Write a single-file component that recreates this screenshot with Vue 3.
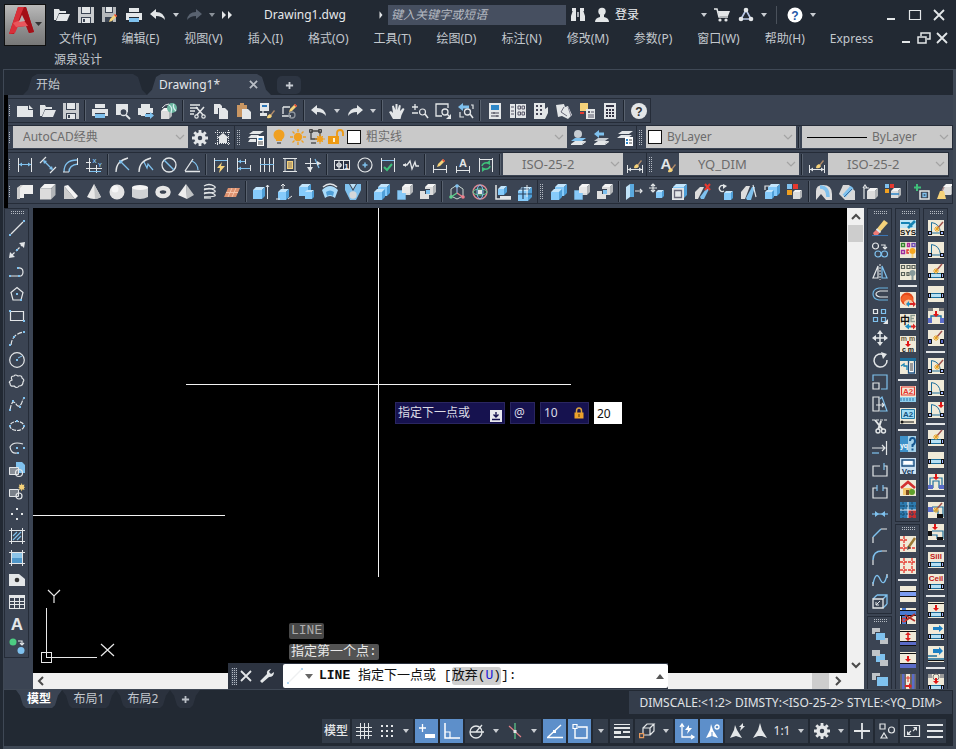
<script setup>
import { h, ref } from 'vue'

const W = '#e3e6e8', B = '#7fc1ee', G = '#8d949c', O = '#f0a020', Y = '#f5d27a', R = '#e5382f', N = '#f0ead8', K = '#111', D = '#3b4453', L = '#5b6cc8', T = '#1d6f9c'

const s = (d, c = W, w = 1.2, x = '') => `<path d="${d}" fill="none" stroke="${c}" stroke-width="${w}" ${x}/>`
const f = (d, c = W) => `<path d="${d}" fill="${c}"/>`
const r = (x, y, w, hh, c = W) => `<rect x="${x}" y="${y}" width="${w}" height="${hh}" fill="${c}"/>`
const o = (x, y, q, c = W, k = 'none', w = 1.2) => `<circle cx="${x}" cy="${y}" r="${q}" fill="${c}" stroke="${k}" stroke-width="${w}"/>`
const t = (x, y, z, txt, c = K) => `<text x="${x}" y="${y}" font-size="${z}" font-weight="bold" font-family="Liberation Sans, Noto Sans CJK SC, sans-serif" fill="${c}" text-anchor="middle">${txt}</text>`
const dots = (list, c = B) => list.map(([x, y]) => r(x, y, 2, 2, c)).join('')
// shaded box: front face at x,y with size z and depth d
const box = (x, y, z, d, blue) => {
  const [a, b, e] = blue ? ['#86cbfb', '#c3e5fb', '#4f9fd8'] : ['#dcdcdc', '#f4f4f4', '#b2b5b8']
  return f(`M${x} ${y + d}h${z}v${z}h${-z}z`, a) + f(`M${x} ${y + d}l${d} ${-d}h${z}l${-d} ${d}z`, b) + f(`M${x + z} ${y + d}l${d} ${-d}v${z}l${-d} ${d}z`, e)
}
const layers = (c, y = 0) => f(`M4 ${9 + y}h11l-4 3H0z`, W) + f(`M4 ${6 + y}h11l-4 3H0z`, c) + s(`M0 ${12.5 + y}h11l4-3`, W, 1)
const pencil = (x, y) => f(`M${x} ${y + 7}l1-3 5-5 2 2-5 5z`, Y) + f(`M${x + 5} ${y}l1-1 2 2-1 1z`, R)
const brush = (x, y) => f(`M${x + 3} ${y + 4}l4-5 1 1-4 5z`, '#b28b6a') + f(`M${x} ${y + 7}q0-3 3-4l2 2q-1 3-5 2z`, Y)
const page = (body) => r(0, 0, 16, 16, N) + body
const dn = (x, y) => f(`M${x - 1} ${y}h2v3h2l-3 3-3-3h2z`, '#e01515')
const win = (y) => r(1, y, 14, 5, '#fff') + r(2, y + 1, 12, 3, '#b7e0f2') + s(`M2 ${y + 0.5}h12M2 ${y + 4.5}h12`, T, 1) + r(0, y, 3, 5, K) + r(13, y, 3, 5, K) + r(1, y + 1, 1, 3, '#9fb6ff') + r(14, y + 1, 1, 3, '#9fb6ff')
const door = s('M3.5 13V2.5q8 1 9 10', T, 1) + s('M3 13h10', T, 1) + r(0, 11, 4, 4, K) + r(12, 11, 4, 4, K) + r(1, 12, 2, 2, '#9fb6ff') + r(13, 12, 2, 2, '#9fb6ff')
const wand = (x, y) => s(`M${x} ${y + 7}l6-7`, '#a0524d', 1.5) + s(`M${x - 3} ${y + 7}h6M${x} ${y + 4}v6M${x - 2} ${y + 5}l4 4M${x - 2} ${y + 9}l4-4`, '#e8a21a', 0.9)
const key = (c = W) => s('M1.5 1v14M14.5 1v14', c, 1)
const star = f('M11 0l1 3 3-1-1 3 2 1-2 1 1 3-3-1-1 3-1-3-3 1 1-3-2-1 2-1-1-3 3 1z', Y)

const icons = {
  open: f('M0 2h5l1 2h6v2H5l-3 7H0z') + f('M5 7h11l-3 7H2z'),
  new: f('M0 3h11v4h5v7H0z') + f('M12 2l4 4h-4z'),
  save: f('M0 0h16v16H0z', '#c9cccf') + r(3, 0, 10, 7, D) + r(4, 0, 8, 6) + r(3, 10, 10, 6, D) + r(4, 11, 8, 5) + r(5, 12, 2, 3, D),
  saveas: f('M0 0h14v15H0z', '#b5b8bb') + r(3, 0, 8, 6, D) + r(4, 0, 6, 5) + r(3, 10, 8, 5, D) + pencil(7, 8),
  print: r(3, 1, 10, 4) + f('M0 6h16v7h-3v-3H3v3H0z') + r(3, 11, 10, 4, B),
  undo: f('M0 7l6-5v3q8 0 9 8-3-4-9-4v3z'),
  redo: f('M16 7l-6-5v3q-8 0-9 8 3-4 9-4v3z'),
  redoOff: f('M16 7l-6-5v3q-8 0-9 8 3-4 9-4v3z', '#596270'),
  more: f('M3 4l4 4-4 4zM9 4l4 4-4 4z'),
  right: f('M6 3l4 5-4 5z'),
  binoc: f('M3 3h3v11H1V9zM10 3h3l2 6v5h-5z') + r(7, 5, 2, 5, '#a9adb3') + r(2, 1, 4, 3) + r(10, 1, 4, 3),
  person: o(8, 4.5, 3.7) + f('M1 15q0-4 5-5V8h4v2q5 1 5 5z'),
  cart: s('M0 2h3l2 8h9', W, 1.5) + f('M4 4h12l-2 5H5z') + o(6, 13, 1.6) + o(12, 13, 1.6),
  tri: s('M8 3L3 12h10z', '#b8c6e6', 1.6) + o(8, 3, 2.3) + o(3, 12, 2.3) + o(13, 12, 2.3),
  help: o(8, 8, 7.5, '#fff') + t(8, 12.5, 12, '?', '#2558a8'),
  min: r(4, 11, 8, 2),
  max: s('M2.500 3.500h11v9h-11z', W, 1.2),
  close: s('M3 3l10 10M13 3L3 13', W, 1.8),
  mdi: s('M2 7h8v6H2z', W, 1.5) + s('M5 6V3h9v6h-3', W, 1.5),
  wrench: f('M1 13l7-7q-1-4 4-5l-2 3 2 2 3-2q0 5-5 5l-7 6z'),
  preview: r(1, 1, 12, 8) + f('M1 9h6l-2 3H1z') + o(8.5, 9, 3.5, D, W, 1.3) + s('M11 12l4 4', W, 1.8),
  publish: r(3, 1, 9, 4) + f('M0 5h15v5H8v2H0z') + r(3, 9, 5, 4) + f('M7 11h5V9l4 3.5-4 3.5v-2H7z', B),
  globe3d: box(0, 5, 8, 3) + o(11, 5, 5, '#6bb6a0') + s('M8 2q4 2 2 8M13 1q-2 3 2 7', '#d8eef0', 1.2) + s('M1 5q3-4 7-4', W, 1),
  cut: s('M0 2h10M0 5h8M0 8h5M0 11h4', W, 1.6) + s('M6 4l8 9M14 4l-8 9', W, 1.6) + o(6.5, 13.5, 1.7, D, W) + o(13.5, 13.5, 1.7, D, W),
  copy: f('M1 1h6l2 2v2H5v6H1z') + f('M6 5h6l3 3v8H6z'),
  paste: f('M1 2h3V0h4v2h3v12H1z', '#c99662') + f('M6 6h6l3 3v7H6z'),
  match: r(1, 0, 9, 8) + r(3, 2, 5, 2, '#2c76b8') + r(1, 10, 7, 3) + brush(8, 8) + s('M4 8v3', W),
  blockedit: s('M1 4h7M1 4v7M0 13h9', W, 1.3) + o(10, 12, 3, 'none', G, 1.3) + pencil(7, 2),
  pan: f('M4 16L0 9l2-1 2 2L3 3l1.700-.5L6.500 7V1h2v6l1.500-5 1.800.5L11 8l3-3 1.500 1-3 6-1 4z'),
  zoompm: s('M0 4h6M3 1v6M0 10h6', W, 1.3) + o(10.5, 9, 3, 'none', W) + s('M13 11l3 4', W, 1.5),
  zoomwin: s('M13 5V1H1v12h6', W, 1.3) + o(10, 9, 3, 'none', W, 1.3) + s('M12 11l2 2', W, 1.5) + f('M16 11v5h-5z'),
  zoomprev: f('M0 4l5-4v2.500h6v3H5V8z', B) + s('M13 2h2v4M2 9v5h4', W) + o(9.5, 9, 3, 'none', W, 1.3) + s('M12 11l3 4', W, 1.5),
  props: r(2, 0, 12, 16) + r(4, 2, 8, 5, '#2c86c8') + s('M4 10h8M4 13h8M7 9v2M10 12v2', '#445', 1),
  design: r(0, 1, 5, 14) + r(6, 1, 10, 14) + s('M1 4h3M1 8h3M1 11h3', '#556', 1) + s('M8 3h2.500v3H8zM12 3h2.500v3H12zM8 9h2.500v3H8zM12 9h2.500v3H12z', '#556', 1),
  palette: f('M1 0h11v6l3-2v6l-3 6H1z') + dots([[3, 2], [7, 2], [3, 6], [7, 6], [3, 10], [7, 10]], '#445'),
  sheet: f('M0 2l8-1 1 3 3-1 4 9-4 4-6-3-4 1z') + s('M8 4l-3 5 6 4', '#667', 1) + s('M12 4l3 9', '#889', 1),
  markup: f('M1 0h8v8H1z', Y) + r(7, 6, 9, 10) + r(9, 8, 2, 2, '#556') + s('M12 9h3M9 12h6M9 14h6', '#556', 1) + s('M1 10h4', R, 2),
  calc: r(2, 0, 12, 16) + r(4, 2, 8, 2, '#334') + dots([[4, 6], [7, 6], [10, 6], [4, 9], [7, 9], [10, 9], [4, 12], [7, 12], [10, 12]], '#334'),
  helpg: o(8, 8, 8) + t(8, 12.5, 12, '?', '#333'),
  gear: o(8, 8, 4, 'none', W, 3.5) + s('M8 0v3M8 13v3M0 8h3M13 8h3M2.300 2.300l2 2M11.700 11.700l2 2M13.700 2.300l-2 2M4.300 11.700l-2 2', W, 2.8),
  wshouse: s('M2.500 0v16M13.500 0v16M0 2.500h16M0 13.500h16', W, 1, 'stroke-dasharray="1 1"') + f('M8 3l6 5h-2v5H4V8H2z'),
  layprop: f('M5 1h11l-4 3H1z') + f('M3 5h8l-2 3H0z') + f('M2 9h6v3H0z') + r(9, 6, 7, 10, '#fff') + r(10.5, 8, 4, 2, '#2c86c8') + s('M10 12h5M10 14h5', '#444', 1),
  bulb: o(8, 6, 5.5, O) + r(5, 10, 6, 2, O) + r(6, 13, 4, 2, '#777'),
  sun: o(8, 8, 4.2, O) + s('M8 0v3M8 13v3M0 8h3M13 8h3M2.500 2.500l2 2M11.500 11.500l2 2M13.500 2.500l-2 2M4.500 11.500l-2 2', O, 1.3),
  freeze: s('M2 2h9v8H2z', '#444', 1.3) + s('M.5.5h3v3h-3zM9.500.5h3v3h-3z', '#444', 1) + o(11, 10, 3, O) + s('M11 5v10M6 10h10M8 7l6 6M14 7l-6 6', O, 1) + s('M2 14h5', '#444', 1.3),
  unlock: r(0, 7, 11, 8, '#ee9a12') + s('M9 7V4q0-3 3-3t3 3v3', '#ee9a12', 1.8) + r(5, 9, 2, 4, '#fff2cc'),
  laycur: layers(B, 2) + o(7, 4, 4, '#c7ccd1'),
  layprev: layers('#c7ccd1', 2) + f('M0 4l5-4v2.500h5v3H5V8z', B),
  laystate: f('M5 1h11l-4 3H1z') + f('M4 5h11l-4 3H0z') + r(8, 7, 8, 9, '#fff') + dots([[9, 9], [9, 12]], '#2c86c8') + s('M12 10h3M12 13h3', '#444', 1),
  dlin: key() + s('M2 7.500h12', B, 1) + f('M2 7.500l3-2v4zM14 7.500l-3-2v4z', B),
  dalign: s('M0 6l6-6M10 16l6-6', W) + s('M4 4l8 8', B) + f('M3 3l4 1-3 3zM13 13l-4-1 3-3z', B),
  darc: s('M1 15Q1 3 14 3M6 15q0-7 9-8', B, 1.3) + s('M0 15h6M14.500 1v7', W, 1),
  dord: s('M3.500 1v14M0 11.500h16', W, 1) + s('M0 5.500h5M10.500 8v8', W, 1) + t(8.5, 5.5, 6, 'X', B) + t(14, 9.5, 6, 'Y', B) + s('M4 14.500h11', B, 1),
  drad: s('M1 15Q1 4 13 1', W, 1.3) + s('M5 4l9 9', B) + f('M4 3l4 1-3 3z', B),
  djog: s('M1 15Q1 4 13 1', W, 1.3) + s('M6 5l3 6 1-4 5 6', B),
  ddia: o(8, 8, 7, 'none', W, 1.3) + s('M3 3l10 10', B, 1.4),
  dang: s('M1 14L9 2M1 14.500h15', W, 1.3) + s('M8 4q6 3 6 9', B),
  dquick: key() + s('M2 3.500h12', B, 1) + f('M9 5l-5 6h3l-1 5 6-7H8z', Y),
  dbase: s('M1.500 1v14M9.500 2v5M14.500 8v6', W, 1) + s('M2 4.500h7M2 11.500h12', B, 1) + f('M2 4.500l3-2v4zM2 11.500l3-2v4z', B),
  dcont: s('M1.500 1v14M5.500 1v14M10.500 1v14M14.500 1v14', W, 1) + s('M1 7.500h14', B, 1),
  dspace: s('M1 1.500h14M1 14.500h14M3 2v12M13 2v12', W, 1) + f('M5 4h6v8H5z', Y) + s('M6 6h4M6 8h4M6 10h4', '#876', 1),
  dbreak: s('M5.500 1v14M0 6.500h16', W, 1) + s('M10 2l4 9', B) + f('M2 10h6l-3 5zM12 4l4 2.500-4 2z', W),
  tol: r(0, 3, 16, 10, W) + r(1, 4, 8, 8, '#2a3040') + r(10, 4, 5, 8, '#2a3040') + s('M5 4v8M2 8h6', W, 1) + o(5, 8, 2, 'none', W) + t(12.5, 11.5, 8, '1', W),
  center: o(8, 8, 7, 'none', W) + s('M8 5.500v5M5.500 8h5', B, 1.5),
  inspect: key() + s('M2 3.500h12', B, 1) + s('M4 10l3 3 5-6', '#3fc07a', 2),
  jogline: s('M0 8h4l3-4 2 8 3-7 1 4h3', W, 1.3) + f('M0 8l3-2v4z'),
  dedit: s('M1.500 8v8M14.500 8v8M1 12.500h14', W, 1) + pencil(5, 3),
  dtedit: s('M1.500 9v7M14.500 9v7M1 13.500h14', W, 1) + t(8, 10, 11, 'A', W),
  dupd: key() + s('M2 2.500h12', W, 1) + s('M4 9q1-4 7-3M12 9q-1 4-7 3', '#3fc07a', 1.6) + f('M12 3v5l-4-2zM4 15v-5l4 2z', '#3fc07a'),
  dstyle: s('M.5 8v8M15.500 8v8M1 12.500h14', W, 1) + f('M1 12.500l3-2v4zM15 12.500l-3-2v4z') + brush(7, 4),
  tstyle: t(6, 12, 15, 'A', W) + brush(8, 8),
  polysolid: f('M0 4l4-3v11l-4 3z', '#b9bcbf') + f('M4 1h12v9H7v4H3V3z', '#eee') + f('M0 4l4-3h2L3 4v11H0z', '#ccc'),
  box: box(0, 0, 11, 4.5),
  wedge: f('M1 2l4-1 10 11-3 3z', '#f4f4f4') + f('M1 2v13h11z', '#ccc'),
  cone: f('M8 0l7 13q-7 4-14 0z', '#e8e8e8') + f('M8 0l7 13q-3 2-6 2z', '#c2c4c6'),
  sphere: o(8, 8, 7.5, '#e4e4e4') + o(6, 5, 3.5, '#f6f6f6'),
  cyl: f('M0 3v10q8 4 16 0V3z', '#d0d2d4') + `<ellipse cx="8" cy="3.500" rx="8" ry="2.600" fill="#f4f4f4"/>`,
  torus: `<ellipse cx="8" cy="8" rx="5.500" ry="4" fill="none" stroke="#e6e6e6" stroke-width="4.500"/>`,
  pyr: f('M8 0l8 11-7 4z', '#bfc2c4') + f('M8 0L0 11l9 4z', '#ededed'),
  helix: [2, 6, 10].map(y => s(`M3 ${y}q5-3 10 0t-10 3`, W, 1.3)).join('') + s('M3 14h7', W),
  planar: f('M4 4h12l-4 9H0z', '#dd9270') + s('M8 4l-4 9M12 4l-4 9M2 8.500h12', '#f4c4aa', 1),
  extrude: box(0, 3, 9, 3, 1) + s('M14.500 1v14M13 3l1.500-2L16 3', W, 1),
  presspull: box(2, 5, 8, 3, 1) + s('M7 6V0M5 2l2-2 2 2M0 15h4M12 15l4-3', W, 1),
  sweep: box(0, 0, 9, 3, 1) + box(6, 6, 7, 2, 1),
  revolve: f('M0 6q8-8 16 0l-3 8q-5-4-10 0z', '#a9dbfa') + s('M1 3q7-6 14 0', W, 1.5) + f('M4 8q4-3 8 0l-1 4q-3-2-6 0z', '#4f9fd8'),
  loft: f('M0 0h4l4 7 4-7h4v6l-5 10H5L0 6z', B) + o(8, 11, 3.7, '#d5d7d8') + f('M5 0h6L8 5z', '#bcdff5'),
  union: box(4, 0, 9, 3, 1) + box(0, 5, 8, 3, 1),
  subtract: box(5, 0, 8, 3) + s('M1 7h7v8H1z', B, 1.5) + f('M1 7h7v8H1z', '#87c9f8') + f('M5 3h8v6H5z', '#e8e8e8'),
  intersect: box(5, 0, 8, 3) + f('M0 7h9v8H0z', '#e0e0e0') + r(5, 5, 5, 5, D) + r(6, 6, 4, 4, B),
  gizmo: s('M8 1L2 5v7l6 3 6-3V5z', '#c9d6d0', 1) + s('M8 1v8', '#9ad', 1.2) + s('M8 9l-6 4', '#5fd08d', 1.3) + s('M8 9l6 4', '#ef7f8c', 1.3) + o(2, 13, 1.8, '#5fd08d') + o(14, 13, 1.8, '#ef7f8c') + o(8, 2, 1.8, B),
  orbit: o(8, 8, 7, 'none', '#e28a94', 1.3) + `<ellipse cx="8" cy="8" rx="7" ry="3" fill="none" stroke="#62cf92"/><ellipse cx="8" cy="8" rx="3" ry="7" fill="none" stroke="#7fc1ee"/>` + r(6, 6, 4, 4),
  ucsface: s('M1 1v14h15', W, 1.5) + box(3, 2, 6, 3, 1) + f('M5 12h11v3H5z'),
  solidedit: box(0, 3, 10, 4, 1) + s('M5 3v12M0 10h14M1 5h10', '#29405c', 1.2) + s('M9 1v12', W, 1),
  exface: f('M0 3l4-3v13l-4 3z', '#bfe2f8') + f('M4 0h4v13H4z', '#5aa9df') + s('M9 7h7M14 5l2 2-2 2', W),
  mvface: s('M0 4h8M4 0v8M2 2l2-2 2 2M2 6l2 2 2-2', W, 1.2) + box(7, 6, 6, 2, 1),
  offface: box(1, 0, 11, 3, 1) + r(0, 4, 12, 12, W) + s('M2.500 6.500h7v7h-7z', '#667', 1.3),
  delface: f('M0 8l5-5h4l-6 12H0z', '#ddd') + f('M5 13l6-8h3l-5 10H6z', B) + s('M10 0l5 6M15 0l-5 6', R, 2),
  rotface: s('M6 2a3 3 0 1 0 0 5', W, 1.3) + f('M5 0l4 2-4 3z') + box(6, 7, 7, 2, 1),
  tapface: f('M0 8l5-6h4L4 15H0z', '#ddd') + f('M5 14l6-11h3l-4 13H6z', B) + s('M12 1l3 12', W),
  cpface: box(4, 0, 9, 3, 1) + box(1, 6, 7, 2, 1) + s('M1 6V2h4', W),
  colface: r(0, 0, 5, 5, B) + r(6, 0, 5, 5, R) + r(0, 6, 5, 5, O) + box(6, 6, 7, 2),
  filletedge: f('M0 7q0-6 7-6 9 0 9 9v6h-6L5 10l-5 6z', '#ddd') + s('M4 3q8 0 8 10', B, 3.5),
  chamedge: f('M4 1h6l6 6v9H6L0 10z', '#d8d8d8') + s('M5 12l8-9', B, 4) + s('M5 13l8-8', '#3b6c98', 1),
  imprint: box(5, 4, 8, 3) + s('M2 15V4h5M1 4l2-3 2 3', W, 1.2),
  coledge: r(0, 0, 4, 4, B) + r(5, 0, 4, 4, R) + r(0, 5, 4, 4, O) + box(6, 4, 7, 3) + s('M6 10h8', '#2c86c8', 1.5),
  clean: s('M3 0v7M0 3.500h7', '#3fc07a', 2) + s('M6 7h9v8H6z', W, 1.5) + s('M9 9.500h3v3H9z', B, 1.3),
  shell: box(6, 0, 8, 3) + f('M3 7h4l2 8H0z', Y) + s('M5 7l2-4', '#a88', 1.5),
  line: s('M2 14L14 2') + dots([[0, 14], [14, 0]]),
  xline: s('M2 14L14 2', W, 1.2, 'stroke-dasharray="5 2"') + f('M16 0l-1 6-5-5zM0 16l1-6 5 5z') + r(7, 7, 2, 2, B),
  pline: s('M1 12h8M8 4q6-1 6 4t-5 4') + dots([[0, 11], [9, 11], [8, 3]]),
  polygon: s('M8 1.500l6 5-2 7.500h-8L2 6.500z') + r(7, 7, 2, 2, B) + r(11, 13, 2, 2, B),
  rect: s('M1.500 3.500h13v9h-13z') + dots([[0, 2], [14, 12]]),
  arc: s('M2 15Q3 4 15 2', W, 1.2, 'stroke-dasharray="5 1.500"') + dots([[0, 14], [4, 6], [14, 1]]),
  circle: o(8, 8, 7.3, 'none', W) + r(7, 7, 2, 2, B) + s('M9 6l4-2', B, 1),
  cloud: s('M3 6q-2-4 2-4 1-2 4 0 4-1 4 2 3 2 1 4 0 4-4 4-2 3-5 0-4 1-4-3-2-1 2-3z'),
  spline: s('M1 14Q3 2 7 8t7-5', W, 1.2, 'stroke-dasharray="5 1"') + dots([[0, 13], [3, 4], [10, 10], [14, 1]]),
  ellipse: `<ellipse cx="8" cy="8" rx="7" ry="4.500" fill="none" stroke="${W}" stroke-width="1.200" stroke-dasharray="4 1"/>` + dots([[7, 2], [0, 7], [14, 7]]),
  earc: s('M14 4Q4 1 1 7q1 7 7 6', W) + dots([[7, 7], [14, 7], [8, 12]]),
  insert: f('M7 0h6l3 3v8H7z', B) + f('M0 5h9v8H0z', '#8a9098') + s('M.5 5.500h9v7h-9z', W, 1) + o(10, 11, 3.5, 'none', W, 1.2),
  mkblock: f('M0 5h9v8H0z', '#7a818a') + s('M.5 5.500h9v7h-9z', W, 1) + o(10, 12, 3, 'none', W) + `<g transform="translate(5 -1) scale(.7)">${star}</g>`,
  point: dots([[7, 2], [2, 7], [12, 7], [7, 12]], W),
  hatch: s('M2.500 0v16M13.500 0v16M0 2.500h16M0 13.500h16', W, 1) + s('M4 8l4-4M4 12l8-8M8 12l4-4', B, 1.2),
  grad: r(3, 3, 10, 10, '#4f97c9') + r(3, 3, 10, 5, '#8cc4e8') + s('M2.500 0v16M13.500 0v16M0 2.500h16M0 13.500h16', W, 1),
  region: f('M0 2h10l6 5v7H0z') + o(8, 8, 2.3, '#333'),
  table: r(0, 1, 16, 14) + r(1, 4, 14, 10, D) + s('M0 7.500h16M0 10.500h16M5.500 4v10M10.500 4v10', W, 1),
  text: t(8, 14, 17, 'A', W),
  addsel: o(4, 4, 3.5, '#4ccc82') + o(12, 12.5, 3.5, B) + s('M9 3h4v4M11 5l2 2 2-2', W),
  erase: s('M0 15.500h16', '#3b76b5', 1) + f('M4 10l8-10 4 3-8 9z', Y) + f('M4 10l-3 3 1 2h4l2-3z', '#ef7b78') + s('M4.500 9l4 3.500', W, 1.8),
  copy2: o(3.5, 4, 3, 'none', W) + o(6, 12, 3, 'none', B) + o(12.5, 12, 3, 'none', B) + s('M9 3h4v4M11 5l2 2 2-2'),
  mirror: s('M6 2v12H1z') + s('M10 2v12h5z', B) + s('M8 0v16', W, 1, 'stroke-dasharray="2 1"'),
  offset: s('M16 2H7Q1 3 1 8t6 6h9', '#69b1e0') + s('M16 5H8Q4 6 4 8t4 3h8'),
  array: s('M1.500 1.500h4v4h-4z') + s('M9.500 1.500h4v4h-4zM1.500 9.500h4v4h-4zM9.500 9.500h4v4h-4z', B) + f('M16 11v5h-5z'),
  move: s('M8 2v12M2 8h12', W, 1.5) + f('M8 0l3 4H5zM8 16l3-4H5zM0 8l4-3v6zM16 8l-4-3v6z'),
  rotate: s('M12 3A6.500 6.500 0 1 0 15 8', W, 1.5) + f('M9 0l6 2-4 5z'),
  scale: s('M1 9h6v6H1z') + s('M1 7V1h14v14H9', B),
  stretch: s('M1 1h6v14H1z') + s('M8 3l2-2 5 14H8', B, 1.2) + s('M4 9h8M10 7l2 2-2 2', W),
  trim: s('M0 2h16', W, 1, 'stroke-dasharray="3 1"') + s('M3 2l8 10M9 3L6 12', W, 2) + o(11.5, 13, 2, D, W, 1.4) + o(6, 13, 2, D, W, 1.4),
  extend: s('M0 8h12M10 5l3 3-3 3') + s('M14.500 1v14') + s('M0 13h7', B),
  brkpt: s('M8 4H1v10h14V4h-3') + s('M12 1v7', B),
  brk: s('M5 4H1v10h14V4h-4') + s('M5 1v6M11 1v6', B),
  join: s('M0 8h16', B) + f('M7 8L3 5v6zM9 8l4-3v6z', B),
  chamfer: s('M1 15V9M9 1h6') + s('M1 9l8-8', B, 1.5),
  fillet: s('M1 15v-5M10 1h5') + s('M1 10Q1 1 10 1', B, 1.5),
  blend: s('M1 14v-4M15 2v4') + s('M1 12Q4 -2 8 7t7-4', B, 1.3),
  explode: s('M5 1h10v9M15 1l-4 4M5 1L1 5M15 10l-4 4', B, 1.3) + s('M1 5h10v9H1z', W, 1.3) + s('M4 11l4-4M4 8v3h3', W, 1),
  order1: r(0, 0, 8, 6, '#bfc3c7') + r(8, 10, 8, 6, '#bfc3c7') + r(3, 4, 10, 8, D) + r(4, 5, 9, 7, B),
  order2: r(4, 4, 9, 8, B) + r(0, 0, 8, 6, '#bfc3c7') + r(8, 10, 8, 6, '#bfc3c7'),
  order3: r(0, 1, 8, 7, '#bfc3c7') + r(4, 4, 12, 10, D) + r(5, 5, 11, 9, B),
  sys: page(r(0, 0, 16, 8, '#bfe6f5') + s('M1 3h8l3 4', '#1684b4', 2) + s('M8 8l7-7', '#1684b4', 2.6) + t(8, 15, 8, 'SYS')),
  set1: page(s('M1.500 1.500h3v3h-3z', '#31842c', 1.4) + s('M7.500 1.500h2v3h-2z', '#b02c96', 1.4) + s('M12 1.500h3v3h-3z', '#6a46b5', 1.4) + s('M1.500 8.500h3v3h-3z', '#9c2d9e', 1.4) + s('M9 8h-2v3h2', R, 1.4) + o(12.5, 9, 3, '#f6a720') + r(11.5, 12, 2, 4, Y)),
  set2: page(s('M1.500 1.500h3v3h-3zM7 1.500h3v3h-3zM12 1.500h3v3h-3zM1.500 8.500h3v3h-3zM7 8.500h2v3h-2z', '#59605a', 1.2) + o(12.5, 9, 3, '#87999a') + r(11.5, 11, 2, 5, '#87999a')),
  head: page(o(7, 7, 6.5, '#e64a1a') + o(8, 10, 4, '#f8c9a5') + f('M1 8q2-8 11-3l2 5q-6-5-10 0z', '#f4642c') + f('M6 12l3-3v2h1v2H9v2z', '#1f8fc4') + f('M10 11h3V9l3 3-3 3v-2h-3z', '#d92323')),
  zhen: page(t(5, 10, 10, '中') + s('M15 1.500h-4v6h4M11 4.500h3', '#8a9a90', 1.3) + f('M5 12.500l4-3v2h2v2H9v2z', '#1f8fc4') + f('M11 11.500h2v-2l3 3-3 3v-2h-2z', '#d92323')),
  mmcm: page(t(8, 5, 7, 'm m', '#6a5a3a') + t(8, 15.5, 7, 'c m') + dn(8, 5)),
  board: page(r(0, 0, 16, 3, T) + r(8, 5, 7, 10, '#fff') + s('M8.500 3v12h6V3', '#1b4f80', 1.3) + s('M10 6h3M10 8h3M10 10h3M10 12h3', '#333', 1) + s('M1 8l3-2v2h3v4', '#1684b4', 1.3)),
  az1: page(s('M1.500 1h13v8h-13z', R, 1.2) + t(8, 8, 8, 'A2', R) + r(0, 11, 16, 5, '#8fd0ee') + s('M1 12v3M4 12v3M7 12v3M10 12v3M13 12v3', '#2c76a8', 1)),
  az2: page(r(1, 1, 14, 10, '#9fdcf5') + s('M1.500 1.500h13v9h-13z', '#267ca8', 1) + t(8, 9, 8, 'A2', '#14527e') + s('M2 14h12', K, 1) + o(2, 14, 1.5, K)),
  yq: r(0, 0, 16, 16, '#3e91c9') + r(8, 0, 8, 16, '#a6d2ea') + t(4, 12, 7, 'yq', '#fff') + s('M10 5q0-3 2.500-3t2.500 3-2.500 4v2', '#15568f', 2) + r(11.5, 12.5, 2, 2, '#15568f'),
  ver: r(0, 0, 16, 16, '#cfe3f2') + s('M2 2h12v6H2z', '#1b4f80', 1.4) + r(4, 3, 8, 3, '#fff') + t(8, 15.5, 8, 'Ver', '#12355c'),
  home: page(s('M1 8l7-6 7 6', '#d23030', 2.6) + r(3, 8, 9, 7, '#f3c66c') + r(6, 10, 3, 5, '#7d4a1e') + o(12, 12, 3, '#5fa02c')),
  blocks: r(0, 0, 16, 16, '#2d7bb0') + r(8, 8, 8, 8, '#c62f2f') + s('M8 0v16M0 8h16', '#eee', 1) + s('M3 0v16M0 4h16M0 12h16M12 0v16', '#1b4766', 1, 'stroke-dasharray="2 1"'),
  axis1: page(s('M4 0v16M0 12h16M0 4h7', R, 1.3, 'stroke-dasharray="3 1"') + s('M8 12l7-10', '#9c7a34', 2.5) + f('M7 14l1-4 3 2z', '#444')),
  axis2: page(s('M4 0v16M12 0v16M0 4h16M0 12h16', R, 1.3, 'stroke-dasharray="3 1"')),
  wall1: page(r(0, 5, 16, 6, '#7b9cf0') + s('M0 5.500h16M0 10.500h16', K, 1.2)),
  wall2: page(s('M0 5h16M4 0v16', '#4a7bd0', 4) + s('M0 2.500h16M0 7.500h16M1.500 8v8M6.500 8v8', K, 1) + s('M5 7l10 6M5 13l10-7', '#b0302a', 1.8) + o(4, 12, 1.8, 'none', R)),
  wall3: page(s('M0 1.500h16M0 11.500h16M0 15.500h16', K, 1) + r(0, 12, 16, 3, L) + s('M8 3v7', R, 1.8) + f('M8 2l3 3H5zM8 11l3-3H5z', '#d22')),
  wall4: page(s('M0 1.500h16M0 11.500h16', K, 1) + r(0, 12, 16, 4, L) + dn(8, 4)),
  wall5: page(s('M1 0v16M5 0v16M11 0v16M15 0v16', K, 1.2) + r(2, 0, 2.5, 16, L) + r(12, 0, 2.5, 16, L) + f('M5 11h4V9l3 3-3 3v-2H5z', '#d22') + s('M8 2v6M6 4h5', R, 1)),
  dr1: page(door + wand(9, 2)),
  dr2: page(door),
  dr3: page(door + dn(13, 0)),
  wn1: page(win(9) + wand(8, 0)),
  wn2: page(win(7)),
  wn3: page(r(0, 0, 5, 3, '#777') + r(11, 0, 5, 3, '#777') + s('M3 14V8h10v6', T, 1.4) + r(0, 10, 4, 5, L) + r(12, 10, 4, 5, L) + dn(8, 3)),
  wn4: page(r(0, 9, 4, 5, L) + r(12, 9, 4, 5, L) + s('M.5 9.500h3v4h-3zM12.500 9.500h3v4h-3z', K, 1) + wand(8, 1)),
  wn5: page(s('M2 14V4h12v10M5 14V7h6v7', T, 1.2) + r(0, 11, 5, 4, L) + r(11, 11, 5, 4, L) + dn(8, 0)),
  cn1: page(s('M4 5h11v10M4 9h6v6', T, 1.2) + r(0, 5, 5, 5, L) + r(9, 12, 6, 4, K) + wand(8, 1)),
  cn2: page(s('M4 7h11v8M4 11h5v4', T, 1.2) + r(0, 7, 4, 5, K) + r(9, 13, 6, 3, K) + dn(7, 0)),
  sill: page(t(8, 7, 8, 'Sill', '#c01818') + win(10)),
  ceil: page(t(8, 7, 8, 'Ceil', '#c01818') + win(10)),
  op1: page(s('M0 1.500h16', K, 1) + win(10) + dn(8, 3)),
  op2: page(win(10) + f('M5 3h6V1l4 3.500L11 8V6H5z', '#1c80c4')),
  op3: page(s('M0 10h9M0 13h16', T, 1.6) + f('M5 3h6V1l4 4-4 4V7H5z', '#1c80c4') + r(0, 14, 16, 1, K)),
  op4: page(o(8, 3, 3, 'none', '#777', 1) + r(0, 0, 4, 4, '#999') + r(12, 0, 4, 4, '#999') + dn(8, 4) + win(11)),
  grid: s('M4.500 0v16M8.500 0v16M12.500 0v16M0 4.500h16M0 8.500h16M0 12.500h16', W, 1),
  snap: [2, 7, 12].map(x => [2, 7, 12].map(y => r(x, y, 2, 2)).join('')).join(''),
  dyn: s('M0 5h7M3.500 1v8', '#fff', 1.3) + r(6, 11, 10, 4, '#fff'),
  ortho: s('M1 0v15h15', '#fff', 1.5) + s('M1 9h5v6', '#fff', 1.2),
  polar: o(7, 9, 6, 'none', W, 1.3) + s('M1 9h14M7 9l6-7', W, 1.3),
  iso: s('M8 0v16', '#5cc48a', 1.3) + s('M2 3l12 11', '#e07f86', 1.2) + r(6.5, 7, 3, 3),
  otrack: s('M1 14L14 2M0 14.500h16', '#fff', 1.4) + r(6, 7, 3, 3, '#fff'),
  osnap: s('M3 4h12v11H3z', '#fff', 1.4) + r(0, 0, 6, 6, '#5d8fca') + s('M1 1.500h4v4H1z', '#fff', 1.2),
  lwt: r(0, 1, 16, 1) + r(0, 4, 16, 2) + r(0, 8, 7, 3) + r(9, 8, 7, 2) + r(0, 13, 16, 2),
  iso3d: s('M4 5h7v7H4zM4 5l4-4h7l-4 4M15 1v7l-4 4', W, 1.2) + r(0, 10, 5, 5, D) + s('M.6 10.600h4v4h-4z', '#e69a5c', 1.2),
  ucs: s('M3 2v12h12M1 4l2-3 2 3M12 12l3 2-3 2', '#fff', 1.3) + f('M10 2L6 7h3l-1 4 5-6h-3z', '#fff'),
  ann1: f('M7 1l2 6 5 8-6-2-6 2 4-8z', '#fff') + s('M8 9v7', '#5d8fca', 1) + o(13, 4, 2, 'none', '#fff', 1.3),
  ann2: f('M6 2l2 5 5 8-6-2-6 2 4-8z') + f('M14 0l-4 4h2l-1 4 5-5h-2z'),
  ann3: f('M8 0l2 7 5 8-5-2H6l-5 2 5-8z'),
  plus: s('M8 0v16M0 8h16', W, 1.8),
  shapes: s('M1 1h5v5H1z') + o(12.5, 7, 3, 'none', W) + s('M5 10l3 5H2z'),
  full: s('M.5 2.500h15v11H.5z', W, 1.2) + s('M4 11l3-3M12 5L9 8', W, 1.1) + f('M3 12V8l4 4zM13 4v4L9 4z'),
  menu: r(0, 1, 16, 2) + r(0, 7, 16, 2) + r(0, 13, 16, 2)
}

const Icon = p => h('svg', { class: 'ic', viewBox: '0 0 16 16', 'aria-hidden': 'true', innerHTML: icons[p.name] })
Icon.props = ['name']

const rows = [
  'new open save | print preview publish globe3d | cut copy paste match blockedit | undo v redo v | pan zoompm zoomwin zoomprev | props design palette sheet markup calc | helpg',
  '=workspace gear wshouse : layprop =layer laycur layprev laystate : =color | =linetype',
  'dlin dalign darc dord | drad djog ddia dang | dquick dbase dcont dspace dbreak | tol center inspect jogline | dedit dtedit dupd | =dim1 dstyle : tstyle =text | dstyle =dim2',
  'polysolid box wedge cone sphere cyl torus pyr helix planar | extrude presspull sweep revolve loft | union subtract intersect | gizmo orbit ucsface solidedit : union subtract intersect | exface mvface offface delface rotface tapface cpface colface | filletedge chamedge imprint coledge | clean shell'
].map(x => x.split(' '))

const combos = {
  workspace: { value: 'AutoCAD经典', size: 'w-ws', label: '工作空间' },
  layer: { value: '粗实线', size: 'w-layer', label: '图层', icons: ['bulb', 'sun', 'freeze', 'unlock'], swatch: true },
  color: { value: 'ByLayer', size: 'w-by', label: '颜色', swatch: true },
  linetype: { value: 'ByLayer', size: 'w-by', label: '线型', line: true },
  dim1: { value: 'ISO-25-2', size: 'w-dim', label: '标注样式' },
  text: { value: 'YQ_DIM', size: 'w-dim', label: '文字样式' },
  dim2: { value: 'ISO-25-2', size: 'w-dim', label: '标注样式 2' }
}

const drawTools = ['line xline pline polygon rect arc circle cloud spline ellipse earc insert mkblock point hatch grad region table text addsel'.split(' ')]
const sideTools = [
  ['erase copy2 mirror offset array move rotate scale stretch trim extend brkpt brk join chamfer fillet blend explode', 'order1 order2 order3'],
  ['sys set1 set2 - head zhen mmcm board - az1 az2 - yq ver home blocks', 'axis1 axis2 - wall1 wall2 wall3 wall4 wall5'],
  ['dr1 dr2 wn1 wn2 wn3 wn4 - dr1 dr2 dr3 - wn1 wn2 wn5 - cn1 cn2 - sill ceil - op1 op2 op3 - op4']
].map(col => col.map(g => g.split(' ')))

const menus = ['文件(F)', '编辑(E)', '视图(V)', '插入(I)', '格式(O)', '工具(T)', '绘图(D)', '标注(N)', '修改(M)', '参数(P)', '窗口(W)', '帮助(H)', 'Express']
const status = [
  ['grid', 'snap', 'v'], ['*dyn'], ['*ortho'], ['polar', 'v', 'iso', 'v'], ['*otrack'], ['*osnap'], ['v'], ['lwt'], ['iso3d', 'v'],
  ['*ucs'], ['*ann1'], ['ann2', 'ann3', '1:1', 'v'], ['gear', 'v'], ['plus'], ['shapes'], ['full', 'menu']
]
const yValue = ref('20')
const search = ref('')
</script>

<template>
  <div class="app">
    <header class="head">
      <button class="logo" aria-label="应用程序菜单">
        <svg viewBox="0 0 40 40" aria-hidden="true">
          <path d="M4 29L13 2h8l8 25-5 1-3-7-9 1-3 7z" fill="#b3151c" />
          <path d="M13 2h8l-2 6-9 20-6 1z" fill="#d8303a" />
          <path d="M16 9l3-7h2l8 25-5 1-7-18-5 10z" fill="#a40f17" />
          <path d="M8 18l10-4 5 7-12 1z" fill="#e9565c" />
          <path d="M14 17l3-7 3 6z" fill="#b5b5b5" />
          <path d="M30 17h7l-3.500 4z" fill="#333" />
        </svg>
      </button>
      <div class="head-main">
        <div class="titlebar">
          <button v-for="n in ['open', 'save', 'saveas', 'print', 'undo']" :key="n" class="tb" :aria-label="n"><Icon :name="n" /></button>
          <button class="car" aria-label="undo list"></button>
          <button class="tb" aria-label="redo"><Icon name="redoOff" /></button>
          <button class="car dim" aria-label="redo list"></button>
          <button class="tb slim" aria-label="more"><Icon name="more" /></button>
          <h1 class="title">Drawing1.dwg</h1>
          <Icon name="right" class="mini" />
          <input v-model="search" class="search" type="text" placeholder="键入关键字或短语" aria-label="搜索" />
          <button class="tb" aria-label="search"><Icon name="binoc" /></button>
          <button class="tb" aria-label="account"><Icon name="person" /></button>
          <a class="login" href="#">登录</a>
          <button class="car push" aria-label="account list"></button>
          <button class="tb" aria-label="cart"><Icon name="cart" /></button>
          <button class="tb" aria-label="apps"><Icon name="tri" /></button>
          <button class="car" aria-label="apps list"></button>
          <span class="vline"></span>
          <button class="tb" aria-label="help"><Icon name="help" /></button>
          <button class="car" aria-label="help list"></button>
          <div class="winctl">
            <button v-for="n in ['min', 'max', 'close']" :key="n" class="tb" :aria-label="n"><Icon :name="n" /></button>
          </div>
        </div>
        <div class="menurow">
          <nav class="menu"><a v-for="m in menus" :key="m" href="#">{{ m }}</a></nav>
          <div class="mdi">
            <button v-for="n in ['min', 'mdi', 'close']" :key="n" class="tb slim" :aria-label="n + ' drawing'"><Icon :name="n" /></button>
          </div>
        </div>
        <nav class="menu second"><a href="#">源泉设计</a></nav>
      </div>
    </header>

    <div class="frame">
      <div class="tabs">
        <button class="tab">开始</button>
        <button class="tab on">Drawing1*<svg class="x" viewBox="0 0 10 10"><path d="M1 1l8 8M9 1L1 9" stroke="#b8bdc4" stroke-width="2" /></svg></button>
        <button class="add" aria-label="新图形"><svg viewBox="0 0 10 10"><path d="M5 1v8M1 5h8" stroke="#c9ced4" stroke-width="2" /></svg></button>
      </div>

      <div class="bars">
        <div v-for="(row, i) in rows" :key="i" class="bar">
          <span class="grip"></span>
          <template v-for="(n, j) in row" :key="j">
            <span v-if="n === '|'" class="sep"></span>
            <span v-else-if="n === ':'" class="grip mid"></span>
            <button v-else-if="n === 'v'" class="car" aria-label="list"></button>
            <label v-else-if="n[0] === '='" class="combo" :class="[combos[n.slice(1)].size, n.slice(1)]">
              <Icon v-for="k in combos[n.slice(1)].icons" :key="k" :name="k" class="state" />
              <span v-if="combos[n.slice(1)].swatch" class="swatch"></span>
              <span v-if="combos[n.slice(1)].line" class="sample"></span>
              <select :aria-label="combos[n.slice(1)].label"><option>{{ combos[n.slice(1)].value }}</option></select>
              <svg class="chev" viewBox="0 0 10 10" aria-hidden="true"><path d="M1 3l4 4 4-4" fill="none" stroke="#a3a3a3" stroke-width="1.200" /></svg>
            </label>
            <button v-else class="tool" :aria-label="n"><Icon :name="n" /></button>
          </template>
        </div>
      </div>

      <main class="work">
        <div class="column left">
          <div v-for="(g, i) in drawTools" :key="i" class="vbar">
            <span class="vgrip"></span>
            <button v-for="n in g" :key="n" class="vtool" :aria-label="n"><Icon :name="n" /></button>
          </div>
        </div>

        <div class="view">
          <section class="canvas" aria-label="绘图区">
            <svg class="drawing" aria-hidden="true">
              <g stroke="#f2f2f2" fill="none" shape-rendering="crispEdges">
                <path d="M345.500 0V369M153 176.500H538M0 307.500H192" />
              </g>
            </svg>
            <svg class="axes" viewBox="0 0 80 80" aria-hidden="true">
              <g stroke="#e8e8e8" fill="none">
                <path d="M6.500 21.500V71.500H57M1.500 66.500h10v10h-10z" shape-rendering="crispEdges" />
                <path d="M8 4l6 6 6-6M14 10v7M61 58l13 12M74 58L61 70" stroke-width="1.200" />
              </g>
            </svg>
            <div class="dynamic">
              <span class="prompt">指定下一点或<svg viewBox="0 0 12 12" aria-hidden="true"><rect width="12" height="12" fill="#e9e9ee" /><path d="M6 2v5M3.500 4.500L6 7l2.500-2.500M2 9.500h8" stroke="#16124f" fill="none" stroke-width="1.400" /></svg></span>
              <span class="chip">@</span>
              <span class="chip lock">10<svg viewBox="0 0 12 12" aria-hidden="true"><path d="M3.500 6V4q0-3 2.500-3t2.500 3v2" fill="none" stroke="#d9a441" stroke-width="1.500" /><rect x="1.500" y="5.500" width="9" height="6" fill="#eda22b" /><rect x="5.500" y="7" width="1" height="3" fill="#5a3a08" /></svg></span>
              <input v-model="yValue" type="text" aria-label="Y" />
            </div>
            <div class="history">
              <span class="old">LINE</span>
              <span>指定第一个点:</span>
            </div>
          </section>
          <div class="hscroll">
            <svg viewBox="0 0 10 10"><path d="M7 1L3 5l4 4" /></svg>
            <span class="hthumb"></span>
            <svg viewBox="0 0 10 10"><path d="M3 1l4 4-4 4" /></svg>
          </div>
          <div class="command">
            <span class="cgrip"></span>
            <button class="tb slim" aria-label="close command line"><Icon name="close" /></button>
            <button class="tb" aria-label="customize"><Icon name="wrench" /></button>
            <div class="cline">
              <Icon name="line" class="cicon" />
              <span class="car dark"></span>
              <p><b>LINE</b> 指定下一点或 [<button class="opt">放弃(<i>U</i>)</button>]:</p>
              <span class="up"></span>
            </div>
          </div>
        </div>

        <div class="vscroll">
          <svg viewBox="0 0 10 10"><path d="M1 7l4-4 4 4" /></svg>
          <span class="vthumb"></span>
          <svg class="end" viewBox="0 0 10 10"><path d="M1 3l4 4 4-4" /></svg>
        </div>

        <div v-for="(col, c) in sideTools" :key="c" class="column">
          <div v-for="(g, i) in col" :key="i" class="vbar">
            <span class="vgrip"></span>
            <template v-for="(n, j) in g" :key="j">
              <span v-if="n === '-'" class="hsep"></span>
              <button v-else class="vtool" :aria-label="n"><Icon :name="n" /></button>
            </template>
          </div>
        </div>
      </main>

      <footer class="foot">
        <div class="layouts">
          <button class="lay on">模型</button>
          <button class="lay">布局1</button>
          <button class="lay">布局2</button>
          <button class="lay plus" aria-label="新布局"><svg viewBox="0 0 10 10"><path d="M5 1v8M1 5h8" stroke="#b9bec5" stroke-width="2" /></svg></button>
          <span class="dims">DIMSCALE:&lt;1:2&gt; DIMSTY:&lt;ISO-25-2&gt; STYLE:&lt;YQ_DIM&gt;</span>
        </div>
        <div class="status">
          <button class="sbtn model">模型</button>
          <div v-for="(g, i) in status" :key="i" class="sgroup" :class="{ active: g[0][0] === '*' }">
            <template v-for="(n, j) in g" :key="j">
              <button v-if="n === 'v'" class="car wide" aria-label="list"></button>
              <button v-else-if="n === '1:1'" class="sbtn ratio">1:1</button>
              <button v-else class="sbtn" :aria-label="n"><Icon :name="n.replace('*', '')" /></button>
            </template>
          </div>
        </div>
      </footer>
    </div>
  </div>
</template>

<style>
body {
  background: #212830;
}
</style>

<style scoped>
.app {
  display: flex;
  flex-direction: column;
  height: 100vh;
  overflow: hidden;
  background: #222933;
  color: #c3c8ce;
  font: 12px/18px "Noto Sans", "Noto Sans CJK SC", sans-serif;
}
.app *,
.app {
  box-sizing: border-box;
}
button,
select,
input {
  margin: 0;
  padding: 0;
  border: 0;
  background: none;
  color: inherit;
  font: inherit;
}
a {
  color: inherit;
  text-decoration: none;
}
button {
  display: flex;
  flex: none;
  align-items: center;
  justify-content: center;
}
.ic {
  display: block;
  flex: none;
  width: 16px;
  height: 16px;
  overflow: visible;
}
.car {
  width: 12px;
  flex: none;
  display: flex;
  justify-content: center;
}
.car::before {
  content: "";
  border: 3px solid transparent;
  border-top: 4px solid #c9cdd2;
  border-bottom: 0;
}
.car.dim::before {
  border-top-color: #8b9199;
}

.head {
  display: flex;
  flex: none;
  height: 69px;
}
.logo {
  width: 42px;
  height: 42px;
  margin: 4px 4px 0;
  border: 1px solid #111;
  background: linear-gradient(#b9b9b9, #8d8d8d 60%, #777);
}
.logo svg {
  width: 40px;
  height: 40px;
}
.head-main {
  flex: 1;
  min-width: 0;
}
.titlebar {
  display: flex;
  align-items: center;
  height: 29px;
  padding-right: 5px;
}
.tb {
  width: 24px;
  height: 22px;
}
.tb.slim {
  width: 18px;
}
.title {
  width: 110px;
  margin: 0 0 0 28px;
  color: #e6e8ea;
  font-size: 12px;
  font-weight: 400;
}
.mini {
  width: 14px;
  height: 12px;
}
.search {
  width: 178px;
  height: 20px;
  padding: 0 3px;
  background: #464f60;
  font-style: italic;
}
.search::placeholder {
  color: #b5bac2;
  opacity: 1;
}
.login {
  margin-left: 1px;
  color: #eceef0;
}
.push {
  margin-left: auto;
}
.vline {
  width: 1px;
  height: 18px;
  margin: 0 6px;
  background: #4a515b;
}
.winctl {
  display: flex;
  margin-left: 60px;
}
.menurow {
  display: flex;
  justify-content: space-between;
  height: 21px;
}
.menu {
  display: flex;
  gap: 25px;
  padding-left: 9px;
  line-height: 20px;
  white-space: nowrap;
}
.menu.second {
  padding-left: 4px;
}
.mdi {
  display: flex;
  align-items: flex-start;
  padding-right: 5px;
}
.mdi .tb {
  height: 18px;
}

.frame {
  display: flex;
  flex: 1;
  flex-direction: column;
  min-height: 0;
  margin-left: 3px;
  border: 1px solid #3f4855;
  border-right-width: 3px;
  border-bottom-width: 3px;
}
.tabs {
  display: flex;
  flex: none;
  height: 25px;
  padding: 4px 0 0 19px;
}
.tab {
  width: 124px;
  padding-left: 13px;
  justify-content: flex-start;
  background: #2d3542;
  clip-path: polygon(0 100%, 5px 75%, 9px 14%, 14px 0, calc(100% - 14px) 0, calc(100% - 9px) 14%, calc(100% - 5px) 75%, 100% 100%);
}
.tab.on {
  padding-left: 12px;
  background: #3b4453;
  color: #e3e6e9;
}
.x {
  width: 9px;
  height: 9px;
  margin: 0 13px 0 auto;
}
.add {
  width: 24px;
  height: 18px;
  margin: 2px 0 0 6px;
  border-radius: 5px;
  background: #2d3542;
}
.add svg,
.plus svg {
  width: 9px;
  height: 9px;
}

.bars {
  display: flex;
  flex: none;
  flex-direction: column;
  align-items: flex-start;
  gap: 2px;
  padding: 3px 0 4px 4px;
  background: linear-gradient(90deg, #000 4px, #3b4453 4px);
}
.bar {
  display: flex;
  align-items: stretch;
  max-width: 100%;
  height: 25px;
  overflow: hidden;
  border: solid #252c38;
  border-width: 1px 1px 1px 0;
  background: #3b4453;
}
.grip,
.vgrip,
.cgrip {
  flex: none;
  background:
    repeating-linear-gradient(90deg, #3b4453 0 1px, transparent 1px 2px),
    repeating-linear-gradient(#b4bac2 0 1px, #3b4453 1px 2px);
  background-clip: content-box;
}
.grip {
  width: 5px;
  padding: 5px 2px 5px 0;
}
.grip.mid {
  width: 10px;
  padding: 4px 3px;
  box-shadow: inset 1px 0 #252c38;
}
.tool {
  width: 23px;
}
.bar .car {
  width: 13px;
}
.bar .car,
.status .car,
.cline .car {
  align-items: center;
}
.sep {
  flex: none;
  width: 1px;
  margin: 1px 3px 1px 2px;
  background: #1e2530;
  box-shadow: 1px 0 #59626f;
}
.combo {
  display: flex;
  flex: none;
  align-items: center;
  height: 22px;
  background: #c9c9c9;
  color: #6c6c6c;
}
.combo select {
  flex: 1;
  min-width: 0;
  padding-left: 10px;
  appearance: none;
}
.w-ws {
  width: 175px;
}
.w-layer {
  width: 300px;
  padding-left: 4px;
}
.w-by {
  width: 150px;
  padding-left: 2px;
}
.w-dim {
  width: 120px;
  font-size: 13px;
}
.w-dim select {
  padding-left: 19px;
}
.layer select,
.color select,
.linetype select {
  padding-left: 5px;
}
.state {
  margin-right: 3px;
}
.swatch {
  flex: none;
  width: 14px;
  height: 14px;
  border: 1px solid #111;
  background: #fff;
}
.sample {
  width: 60px;
  height: 1px;
  margin-left: 3px;
  background: #000;
}
.chev {
  width: 10px;
  height: 10px;
  margin-right: 3px;
}

.work {
  display: flex;
  flex: 1;
  min-height: 0;
  padding-right: 5px;
  overflow: hidden;
  background: #3b4453;
}
.column {
  flex: none;
  width: 25px;
  height: 100%;
  margin-left: 3px;
  overflow: hidden;
}
.column.left {
  margin: 0 4px 0 0;
}
.vbar {
  display: flex;
  flex-direction: column;
  align-items: center;
  margin-bottom: 2px;
  border: 1px solid #252c38;
}
.vgrip {
  width: 14px;
  height: 8px;
  padding: 2px 0 3px;
}
.vtool {
  width: 22px;
  height: 22px;
}
.hsep {
  flex: none;
  width: 19px;
  height: 2px;
  margin: 2px 0;
  background: #e3e5e7;
}
.view {
  position: relative;
  display: flex;
  flex: 1;
  flex-direction: column;
  min-width: 0;
}
.canvas {
  position: relative;
  flex: 1;
  min-height: 0;
  overflow: hidden;
  background: #000;
}
.drawing {
  position: absolute;
  inset: 0;
  width: 100%;
  height: 100%;
}
.axes {
  position: absolute;
  left: 7px;
  bottom: 7px;
  width: 80px;
  height: 80px;
}
.dynamic {
  position: absolute;
  left: 362px;
  top: 194px;
  display: flex;
  gap: 5px;
  color: #dcdce6;
  line-height: 20px;
}
.dynamic svg {
  width: 12px;
  height: 12px;
}
.prompt,
.chip {
  display: flex;
  align-items: center;
  height: 22px;
  padding: 0 4px;
  border: 1px solid #2a2660;
  background: #16124f;
}
.prompt {
  justify-content: space-between;
  width: 110px;
  padding: 0 2px;
}
.prompt svg {
  margin-top: 6px;
}
.chip {
  width: 25px;
  padding: 0 3px;
}
.chip.lock {
  width: 49px;
  justify-content: space-between;
}
.dynamic input {
  width: 28px;
  height: 22px;
  padding-left: 3px;
  background: #fff;
  color: #111;
}
.history {
  position: absolute;
  left: 256px;
  bottom: 13px;
  display: flex;
  flex-direction: column;
  align-items: flex-start;
  gap: 5px;
  color: #e8e8e8;
  font: 13px/16px "Liberation Mono", "Noto Sans CJK SC", monospace;
}
.history span {
  padding: 0 2px;
  border-radius: 2px;
  background: #535353;
}
.history .old {
  background: #484848;
  color: #adadad;
}
.hscroll {
  display: flex;
  flex: none;
  align-items: center;
  height: 16px;
  padding: 0 4px 0 3px;
  background: #f0f0f0;
}
.hscroll svg,
.vscroll svg {
  width: 10px;
  height: 10px;
  fill: none;
  stroke: #4a4a4a;
  stroke-width: 2;
}
.hthumb {
  width: 17px;
  height: 16px;
  margin: 0 4px 0 auto;
  background: #cdcdcd;
}
.vscroll {
  display: flex;
  flex: none;
  flex-direction: column;
  align-items: center;
  width: 17px;
  padding: 4px 0 19px;
  background: #f0f0f0;
}
.vthumb {
  width: 15px;
  height: 17px;
  margin-top: 3px;
  background: #cdcdcd;
}
.vscroll .end {
  margin-top: auto;
}
.command {
  position: absolute;
  left: 195px;
  right: 179px;
  bottom: 0;
  display: flex;
  align-items: center;
  height: 26px;
  background: #2c3340;
}
.cgrip {
  width: 6px;
  height: 17px;
  margin: 0 0 0 3px;
}
.cline {
  display: flex;
  flex: 1;
  align-items: center;
  align-self: stretch;
  margin: 1px 0 1px 4px;
  padding: 0 4px;
  border-radius: 2px;
  background: #fff;
  color: #111;
}
.cicon {
  opacity: 0.6;
}
.car.dark {
  margin: 0 4px 0 0;
}
.car.dark::before {
  border-width: 4px 4px 0;
  border-top: 5px solid #666;
}
.cline p {
  flex: 1;
  margin: 0;
  font: 13px/18px "Liberation Mono", "Noto Sans CJK SC", monospace;
  white-space: nowrap;
}
.opt {
  display: inline;
  border-radius: 3px;
  background: #cfcfcf;
}
.opt i {
  color: #1414d8;
  font-style: normal;
}
.up {
  border: 4px solid transparent;
  border-top: 0;
  border-bottom: 5px solid #555;
}

.foot {
  flex: none;
  border-top: 1px solid #3f4855;
}
.layouts {
  display: flex;
  align-items: flex-start;
  height: 29px;
  padding-left: 12px;
}
.lay {
  width: 54px;
  height: 18px;
  background: #2b323e;
  clip-path: polygon(0 0, 100% 0, calc(100% - 4px) 30%, calc(100% - 7px) 85%, calc(100% - 10px) 100%, 10px 100%, 7px 85%, 4px 30%);
}
.lay.on {
  width: 46px;
  background: #3b4453;
  color: #fff;
  font-weight: 700;
}
.lay.plus {
  width: 30px;
}
.dims {
  margin: 1px 1px 0 auto;
  padding: 0 10px;
  background: #343d4b;
  color: #e1e4e7;
  line-height: 23px;
}
.status {
  display: flex;
  justify-content: flex-end;
  gap: 2px;
  height: 27px;
  padding: 0 7px 3px 0;
}
.sgroup {
  display: flex;
  background: #333c49;
}
.sgroup.active {
  background: #5d8fca;
}
.sbtn {
  width: 23px;
  color: #e6e8ea;
}
.sbtn.model {
  width: 28px;
  background: #333c49;
  font-weight: 500;
}
.sbtn.ratio {
  width: 22px;
}
.car.wide {
  width: 15px;
}
</style>
